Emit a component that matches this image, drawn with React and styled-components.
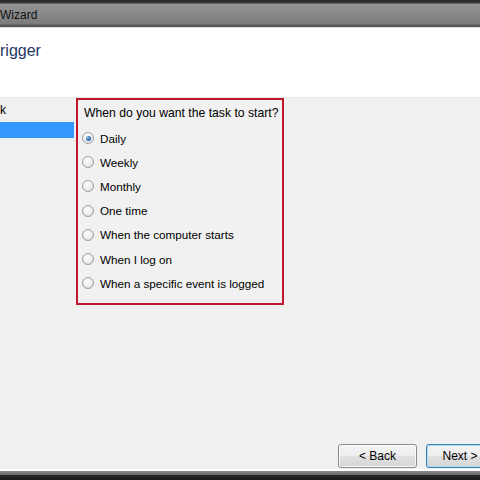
import React, { useState } from "react";
import styled, { createGlobalStyle } from "styled-components";

const GlobalStyle = createGlobalStyle`
  html, body {
    margin: 0;
    padding: 0;
    background: #f0f0f0;
  }
  body {
    font-family: "Liberation Sans", Arial, sans-serif;
  }
`;

const Window = styled.div`
  width: 480px;
  height: 480px;
  display: flex;
  flex-direction: column;
  overflow: hidden;
`;

const TitleBar = styled.div`
  height: 28px;
  flex-shrink: 0;
  display: flex;
  align-items: center;
  box-sizing: border-box;
  padding-top: 2px;
  background: linear-gradient(
    to bottom,
    #262626 0px,
    #3a3a3a 3px,
    #939393 4px,
    #8a8a8a 12px,
    #7c7c7c 24px,
    #5a5a5a 25px,
    #4e4e4e 27px,
    #dcdcdc 27px,
    #dcdcdc 28px
  );
`;

const Title = styled.span`
  font-size: 12px;
  color: #111;
`;

const Header = styled.div`
  height: 69px;
  flex-shrink: 0;
  background: #ffffff;
  display: flex;
  align-items: flex-start;
`;

const Heading = styled.h1`
  margin: 13px 0 0 0;
  font-size: 16px;
  line-height: 20px;
  font-weight: normal;
  color: #1e3766;
`;

const Body = styled.div`
  flex: 1;
  display: flex;
  flex-direction: column;
  background: #f0f0f0;
  border-top: 1px solid #e6e6e6;
`;

const Main = styled.div`
  flex: 1;
  display: flex;
  align-items: flex-start;
`;

const Sidebar = styled.div`
  width: 74px;
  flex-shrink: 0;
  padding-top: 4px;
  display: flex;
  flex-direction: column;
  gap: 4px;
`;

const SideItem = styled.div`
  height: 16px;
  line-height: 16px;
  font-size: 12px;
  color: ${({ selected }) => (selected ? "#ffffff" : "#000000")};
  background: ${({ selected }) => (selected ? "#3399ff" : "transparent")};
  white-space: nowrap;
`;

const RedBox = styled.div`
  box-sizing: border-box;
  width: 208px;
  height: 207px;
  margin: 0 0 0 2px;
  border: 2px solid #c2162c;
  padding: 5px 4px;
  background: #f1f1f1;
`;

const Question = styled.div`
  font-size: 12.2px;
  line-height: 16px;
  margin-left: 2px;
  color: #000;
  white-space: nowrap;
`;

const Options = styled.div`
  margin-top: 5px;
  display: flex;
  flex-direction: column;
`;

const OptionRow = styled.label`
  height: 24.2px;
  display: flex;
  align-items: center;
  gap: 6px;
  font-size: 11.7px;
  color: #000;
  cursor: default;
  white-space: nowrap;
`;

const Radio = styled.span`
  position: relative;
  width: 12px;
  height: 12px;
  box-sizing: border-box;
  border-radius: 50%;
  border: 1px solid #a0a0a0;
  background: radial-gradient(circle at 40% 35%, #ffffff 0%, #ececec 55%, #d4d4d4 100%);
  flex-shrink: 0;

  &::after {
    content: "";
    display: ${({ checked }) => (checked ? "block" : "none")};
    position: absolute;
    left: 2.5px;
    top: 2.5px;
    width: 5px;
    height: 5px;
    border-radius: 50%;
    background: radial-gradient(circle at 35% 35%, #8cc4ef 0%, #2a6bb0 55%, #1b4e86 100%);
  }
`;

const Footer = styled.div`
  display: flex;
  justify-content: flex-end;
  gap: 9px;
  margin-right: -14px;
  padding-bottom: 1px;
`;

const Button = styled.button`
  width: ${({ primary }) => (primary ? "68px" : "79px")};
  height: 24px;
  font-family: "Liberation Sans", Arial, sans-serif;
  font-size: 12px;
  color: #000;
  border-radius: 3px;
  border: 1px solid ${({ primary }) => (primary ? "#3c7fb1" : "#8a8a8a")};
  box-shadow: inset 0 0 0 1px
    ${({ primary }) => (primary ? "rgba(166, 216, 245, 0.9)" : "rgba(255, 255, 255, 0.8)")};
  background: linear-gradient(
    to bottom,
    #f4f4f4 0%,
    #ededed 50%,
    #e0e0e0 51%,
    #d6d6d6 100%
  );
  padding: 0;
`;

const BottomFrame = styled.div`
  height: 11px;
  flex-shrink: 0;
  background: linear-gradient(
    to bottom,
    #ffffff 0px,
    #ffffff 2px,
    #8a8a8a 2px,
    #6a6a6a 6px,
    #262626 6px,
    #1a1a1a 11px
  );
`;

const options = [
  "Daily",
  "Weekly",
  "Monthly",
  "One time",
  "When the computer starts",
  "When I log on",
  "When a specific event is logged",
];

const App = () => {
  const [choice, setChoice] = useState("Daily");

  return (
    <>
      <GlobalStyle />
      <Window>
        <TitleBar>
          <Title>Wizard</Title>
        </TitleBar>
        <Header>
          <Heading>rigger</Heading>
        </Header>
        <Body>
          <Main>
            <Sidebar>
              <SideItem>k</SideItem>
              <SideItem selected />
            </Sidebar>
            <RedBox>
              <Question>When do you want the task to start?</Question>
              <Options>
                {options.map((o) => (
                  <OptionRow key={o} onClick={() => setChoice(o)}>
                    <Radio checked={choice === o} />
                    {o}
                  </OptionRow>
                ))}
              </Options>
            </RedBox>
          </Main>
          <Footer>
            <Button>&lt; Back</Button>
            <Button primary>Next &gt;</Button>
          </Footer>
        </Body>
        <BottomFrame />
      </Window>
    </>
  );
};

export default App;
